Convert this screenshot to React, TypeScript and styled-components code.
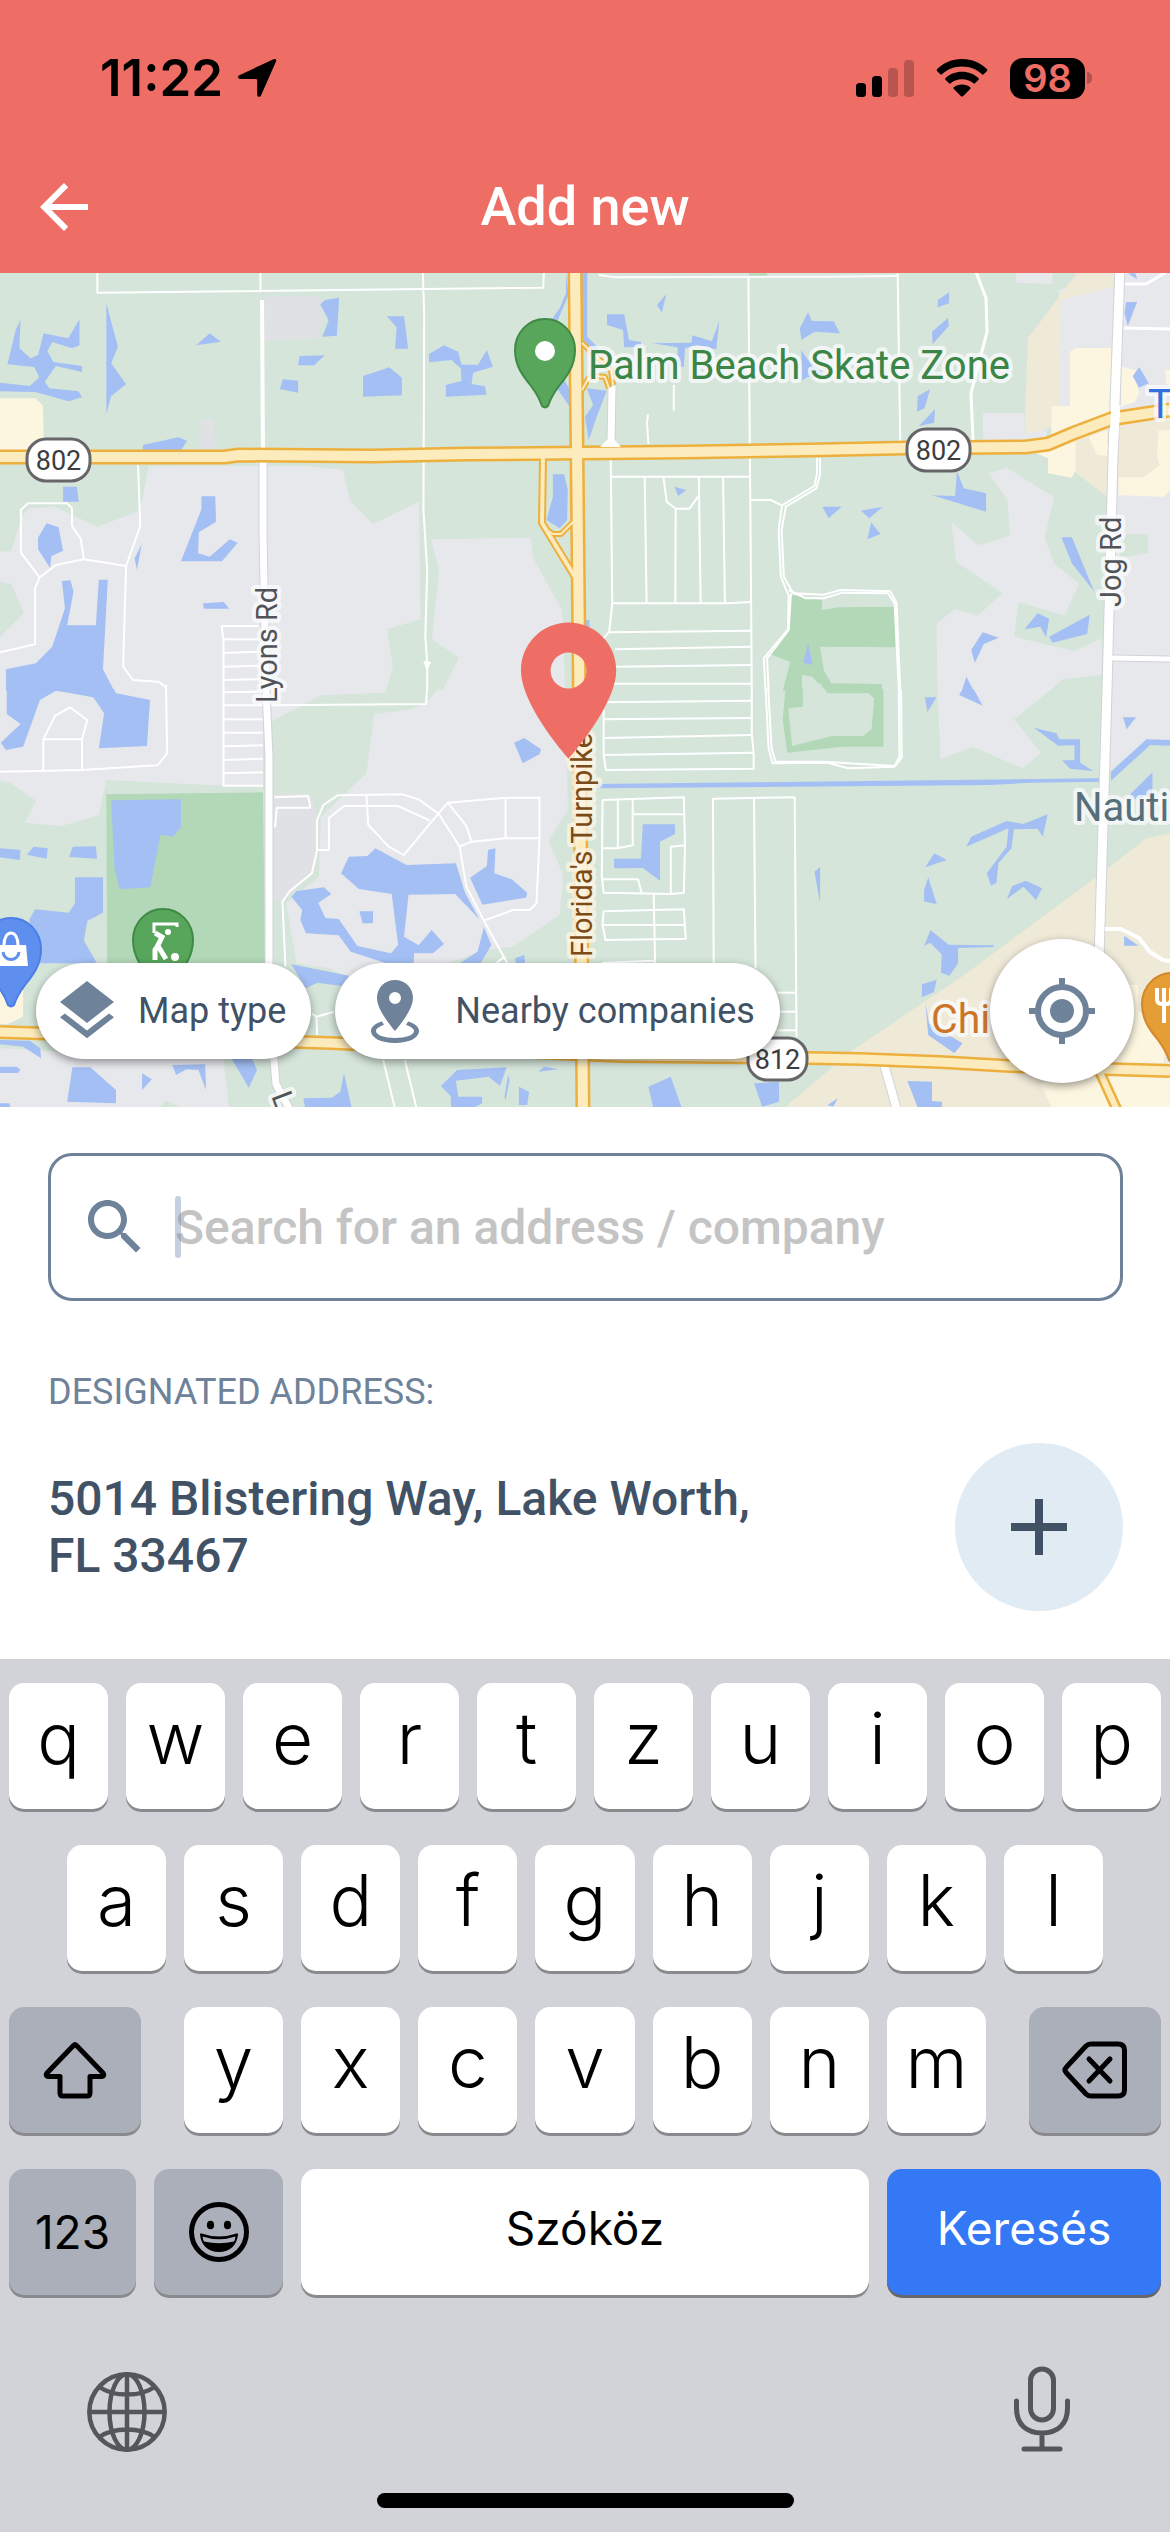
import React from "react";
import styled, { createGlobalStyle } from "styled-components";

const color = {
  brand: "#ee6e66",
  slate: "#6e8299",
  ink: "#415266",
  keyboard: "#d1d3d9",
  functionKey: "#abafba",
  tool: "#53565c",
  action: "#3478f6",
};

const ui = `Roboto, "Noto Sans", sans-serif`;
const system = `Inter, Roboto, sans-serif`;

const GlobalStyle = createGlobalStyle`
  *, *::before, *::after { box-sizing: border-box; }
  body { margin: 0; background: #fff; font-family: ${ui}; }
  button { margin: 0; padding: 0; border: 0; background: none; color: inherit; font: inherit; cursor: pointer; }
  svg { display: block; flex: none; }
`;

const Screen = styled.div`
  display: flex;
  flex-direction: column;
  min-height: 100vh;
  overflow: hidden;
`;

/* ---------- header ---------- */

const Header = styled.header`
  background: ${color.brand};
`;

const StatusBar = styled.div`
  display: flex;
  align-items: center;
  justify-content: space-between;
  height: 141px;
  padding: 15px 78px 0 100px;
  color: #000;
  font-family: ${system};
`;

const StatusGroup = styled.div<{ $gap: number }>`
  display: flex;
  align-items: center;
  gap: ${(p) => p.$gap}px;
`;

const Clock = styled.span`
  font-size: 51px;
  font-weight: 600;
  line-height: 60px;
`;

const Battery = styled.span`
  display: flex;
  align-items: center;
  gap: 2px;
`;

const BatteryLevel = styled.span`
  width: 75px;
  border-radius: 13px;
  background: #000;
  color: ${color.brand};
  font-size: 38px;
  font-weight: 600;
  line-height: 41px;
  text-align: center;
`;

const BatteryCap = styled.span`
  width: 5px;
  height: 12px;
  border-radius: 0 5px 5px 0;
  background: rgba(0, 0, 0, 0.25);
`;

const AppBar = styled.div`
  display: grid;
  grid-template-columns: 72px 1fr 72px;
  align-items: center;
  height: 132px;
  padding: 0 28px;
  color: #fff;
`;

const Title = styled.h1`
  margin: 0;
  font-size: 54px;
  font-weight: 500;
  line-height: 64px;
  text-align: center;
`;

/* ---------- map ---------- */

const MapArea = styled.section`
  position: relative;
  display: flex;
  flex: 1 1 0;
  min-height: 480px;
  overflow: hidden;
`;

const MapDrawing = styled.svg`
  width: 100%;
  height: 100%;
  font-family: ${ui};
`;

const MapControls = styled.div`
  position: absolute;
  right: 36px;
  bottom: 24px;
  left: 36px;
  display: flex;
  align-items: center;
  gap: 24px;
`;

const Pill = styled.button<{ $inset: number; $gap: number }>`
  display: flex;
  align-items: center;
  gap: ${(p) => p.$gap}px;
  height: 96px;
  padding: 0 25px 0 ${(p) => p.$inset}px;
  border-radius: 48px;
  background: #fff;
  box-shadow: 0 3px 8px rgba(0, 0, 0, 0.4);
  color: ${color.ink};
  font-size: 36px;
  line-height: 42px;
`;

const LocateButton = styled.button`
  display: flex;
  align-items: center;
  justify-content: center;
  width: 144px;
  height: 144px;
  margin-left: auto;
  border-radius: 50%;
  background: #fff;
  box-shadow: 0 3px 8px rgba(0, 0, 0, 0.4);
  color: ${color.slate};
`;

/* ---------- address panel ---------- */

const Panel = styled.section`
  padding: 46px 47px 48px 48px;
  background: #fff;
`;

const SearchBox = styled.label`
  display: flex;
  align-items: center;
  gap: 24px;
  height: 148px;
  padding: 0 28px;
  border: 3px solid ${color.slate};
  border-radius: 24px;
  color: ${color.slate};
`;

const SearchField = styled.span`
  position: relative;
  display: flex;
  flex: 1;
`;

const Caret = styled.span`
  position: absolute;
  top: 0;
  left: 0;
  width: 6px;
  height: 62px;
  border-radius: 3px;
  background: rgba(120, 140, 180, 0.42);
`;

const SearchInput = styled.input`
  width: 100%;
  height: 62px;
  padding: 0;
  border: 0;
  outline: 0;
  background: none;
  color: ${color.ink};
  font-family: ${ui};
  font-size: 48px;
  font-weight: 500;
  &::placeholder {
    color: #c4c4c4;
    opacity: 1;
  }
`;

const PanelLabel = styled.h2`
  margin: 70px 0 30px;
  color: ${color.slate};
  font-size: 36px;
  font-weight: 400;
  line-height: 42px;
`;

const AddressRow = styled.div`
  display: flex;
  align-items: center;
  justify-content: space-between;
`;

const Address = styled.p`
  max-width: 760px;
  margin: 0;
  color: ${color.ink};
  font-size: 48px;
  font-weight: 500;
  line-height: 57px;
`;

const AddButton = styled.button`
  display: flex;
  align-items: center;
  justify-content: center;
  width: 168px;
  height: 168px;
  border-radius: 50%;
  background: #e1ebf4;
  color: ${color.ink};
`;

/* ---------- keyboard ---------- */

const Keyboard = styled.section`
  display: flex;
  flex-direction: column;
  gap: 36px;
  padding: 24px 9px;
  background: ${color.keyboard};
  font-family: ${system};
`;

const KeyRow = styled.div<{ $inset?: number; $gap?: number; $grow?: number }>`
  display: flex;
  flex: ${(p) => p.$grow ?? 1} 1 0;
  gap: ${(p) => p.$gap ?? 18}px;
  padding: 0 ${(p) => p.$inset ?? 0}px;
`;

const Key = styled.button<{ $tone?: "plain" | "function" | "action"; $grow?: number }>`
  display: flex;
  flex: ${(p) => p.$grow ?? 1} 1 0;
  align-items: center;
  justify-content: center;
  min-width: 0;
  height: 126px;
  border-radius: 15px;
  background: ${(p) =>
    p.$tone === "function" ? color.functionKey : p.$tone === "action" ? color.action : "#fff"};
  box-shadow: 0 3px 0 ${(p) => (p.$tone === "action" ? "#65676b" : "#898a8d")};
  color: ${(p) => (p.$tone === "action" ? "#fff" : "#000")};
  font-size: 46px;
  line-height: 56px;
`;

const LetterKey = styled(Key)`
  padding-bottom: 16px;
  font-size: 71px;
  font-weight: 350;
  line-height: 86px;
`;

const WordKey = styled(Key)`
  padding-bottom: 8px;
`;

const ToolRow = styled.div`
  display: flex;
  align-items: flex-end;
  justify-content: space-between;
  margin-top: 35px;
  padding: 0 91px 0 78px;
  color: ${color.tool};
`;

const HomeIndicator = styled.div`
  align-self: center;
  width: 417px;
  height: 15px;
  margin-top: 5px;
  border-radius: 8px;
  background: #000;
`;

/* ---------- map data ---------- */

/* The map is split in four tiles; each one has its own 1568 x 1260 grid. */
type Tile = {
  x: number;
  y: number;
  land: [string, string][];
  water: string[];
  lanes: string[];
};

const GRAY = "#e7e8ec";
const DIM = "#e0e1e5";
const MEADOW = "#d5e5da";
const PARK = "#b2d8b8";
const SAND = "#efe9d8";
const CREAM = "#fcf5e0";
const WATER = "#a3bff4";

const tiles: Tile[] = [
  {
    x: 0,
    y: 270,
    land: [
      [GRAY, "0,845 30,843 58,740 75,716 145,710 262,770 375,722 399,588 820,587 920,600 937,690 1000,762 1123,695 1127,1048 1037,1078 1053,1187 1035,1262 0,1262"],
      [MEADOW, "0,935 30,942 64,1030 0,1100"],
      [GRAY, "1155,808 1422,803 1428,862 1507,1022 1515,1262 1185,1262 1230,1163 1158,1108 1177,900"],
      [DIM, "708,78 858,80 870,135 852,205 708,212"],
      [DIM, "540,448 572,445 578,540 535,540"],
      [CREAM, "0,385 95,385 115,407 118,545 0,545"],
    ],
    water: [
      "55,150 52,235 82,265 102,255 117,190 183,205 213,148 213,226 193,235 140,216 127,243 143,276 220,288 220,306 150,288 120,335 132,355 210,364 220,382 184,394 95,366 0,364 0,338 80,348 105,322 92,291 20,283 42,180",
      "285,100 316,230 298,280 338,343 298,378 285,432",
      "526,226 562,190 592,215",
      "858,103 872,90 909,83 903,197 864,200 881,150",
      "1037,139 1083,139 1094,236 1059,236 1063,172",
      "803,258 870,256 842,286 799,286",
      "758,328 799,332 799,368 750,357",
      "973,318 1044,292 1077,323 1077,376 973,380",
      "1150,252 1190,226 1228,245 1237,284 1281,284 1305,240 1321,290 1268,308 1264,342 1300,349 1304,374 1195,380 1195,345 1237,333 1235,295 1210,270 1150,277",
      "383,525 478,502 501,512 486,540 383,542",
      "169,650 206,650 211,695 169,695",
      "102,803 125,760 157,772 169,842 138,858 134,893 102,838",
      "540,679 577,679 579,755 533,787 531,850 562,860 616,808 637,818 595,874 485,874 540,718",
      "380,822 367,900 361,865",
      "544,1000 600,996 614,1016 546,1016",
      "166,933 189,931 197,965 180,1066 257,1066 265,929 289,929 276,1198 306,1262 16,1262 16,1198 96,1180 140,1130 174,1015",
      "1517,10 1524,75 1495,150 1478,150 1500,115 1517,70",
      "1490,350 1510,325 1528,360 1528,412",
      "1482,613 1512,613 1522,660 1520,750 1500,775 1465,750 1482,680",
    ],
    lanes: [
      "261,0 261,68 1456,53 1458,0",
      "698,0 698,62",
      "1133,0 1137,130 1135,720 1145,900 1140,1100 1145,1180 1145,1260",
      "370,585 376,768 338,888 330,1190 357,1230 425,1235 445,1252",
      "338,888 225,868 216,806 193,768 193,715 180,700 75,700 56,720 56,848 106,922 94,955 94,1123 0,1147",
      "106,922 150,885 225,868",
      "693,1068 594,1068 599,1110 599,1260",
      "599,1108 700,1108",
      "599,1149 700,1145",
      "599,1190 700,1187",
      "599,1230 700,1227",
      "1137,1175 1145,1195 1152,1178 1137,1175",
    ],
  },
  {
    x: 585,
    y: 270,
    land: [
      [GRAY, "1155,0 1253,0 1253,43 1157,38"],
      [GRAY, "1270,60 1418,0 1568,0 1568,1262 1385,1262 1400,680 1400,440 1270,440"],
      [SAND, "1318,10 1418,10 1418,50 1275,90 1270,410 1250,470 1190,500 1178,485 1187,205"],
      [GRAY, "982,755 995,875 1120,970 1053,1036 990,1018 942,1062 945,1262 1245,1262 1280,1228 1385,1215 1385,1105 1310,1143 1150,1100 1162,997 1285,1036 1325,942 1258,882 1232,803 1257,682 1132,594 1082,610 1132,690 1140,797 1053,826"],
      [GRAY, "1067,430 1177,430 1178,490 1240,480 1230,520 1067,520"],
      [CREAM, "1300,245 1315,234 1410,234 1410,450 1360,475 1250,510 1250,408 1300,408"],
      [CREAM, "1437,290 1475,300 1485,370 1475,395 1437,410"],
      [CREAM, "1555,300 1568,300 1568,350 1558,340"],
      [SAND, "1310,510 1430,450 1568,440 1568,640 1430,640 1400,680 1315,608"],
      [CREAM, "1200,545 1315,500 1315,600 1305,623 1241,610 1241,565"],
      [CREAM, "1350,500 1400,480 1400,557 1372,555"],
      [CREAM, "1430,622 1498,622 1540,585 1533,560 1537,482 1568,480 1568,660 1553,680 1430,676"],
      [MEADOW, "1450,793 1509,793 1509,848 1430,865"],
      [PARK, "440,10 488,10 488,18 440,18"],
      [PARK, "552,975 635,990 635,1020 680,1012 830,1010 833,1132 630,1130 640,1200 660,1240 795,1242 797,1262 530,1262 550,1175 490,1150 545,1080"],
      [MEADOW, "582,1215 610,1220 640,1262 582,1262"],
    ],
    water: [
      "193,105 218,72 206,128",
      "59,133 105,133 118,210 150,216 150,230 105,232 102,180 59,165",
      "180,220 285,218 288,196 340,214 360,152 352,238 300,225 268,235 265,290 250,290 248,232",
      "576,175 598,126 608,153 667,154 683,190 615,185 580,210",
      "580,240 598,270 640,310 620,325 598,320 580,332",
      "946,90 976,67 976,100 945,112",
      "930,185 973,144 975,168 932,222",
      "892,378 925,358 910,415 890,425",
      "938,418 936,458 895,468",
      "5,355 58,362 35,430 10,510 0,440 22,405",
      "240,650 272,660 250,678",
      "636,710 688,710 653,745",
      "740,722 798,710 762,745",
      "767,757 792,792 757,808",
      "997,603 1015,655 1075,670 1075,725 930,676 992,678",
      "1277,802 1305,802 1365,965 1305,880",
      "1213,1030 1244,1046 1236,1102 1220,1070 1178,1078",
      "1244,1100 1353,1034 1346,1092 1253,1118",
      "1066,1087 1109,1103 1069,1122 1045,1178 1035,1140",
      "1022,1220 1042,1262 1010,1262",
      "598,1118 610,1185 585,1178",
      "1450,97 1480,95 1455,168 1446,130",
      "1486,292 1511,340 1485,353 1468,318",
      "1455,10 1475,10 1480,28",
      "0,1050 12,1050 12,1075 0,1075",
      "-12,0 6,0 6,200 36,235 26,248 -12,205",
    ],
    lanes: [
      "37,15 80,22 640,20 838,18",
      "438,22 445,960 447,1260",
      "838,10 845,515",
      "238,345 238,422",
      "169,433 166,460 170,522",
      "69,570 73,1000 65,1085 50,1105",
      "71,620 440,620",
      "160,620 165,1000",
      "210,620 219,695 243,716 280,716 305,677",
      "243,716 242,1000",
      "305,620 310,1000",
      "370,620 375,1000",
      "73,1000 380,1000 445,996",
      "65,1087 445,1082",
      "80,1138 445,1130",
      "80,1190 445,1185",
      "60,1241 445,1241",
      "445,690 498,690 528,706 615,648 622,610 622,563",
      "535,712 620,655 630,615 630,563",
      "528,706 519,780 525,920 546,978",
      "538,712 527,780 533,920 558,970 640,974 685,960 818,964 835,998 845,1260",
      "546,960 592,985 640,985 690,968 812,970 830,1000 841,1260",
      "552,970 546,1080 488,1165 492,1260",
      "546,978 544,1078 479,1165 484,1260",
    ],
  },
  {
    x: 0,
    y: 690,
    land: [
      [GRAY, "0,-2 1035,-2 1030,8 862,16 725,96 705,100 705,287 598,287 285,270 265,375 165,408 66,398 97,333 30,280 0,272"],
      [DIM, "735,312 838,312 848,380 848,540 760,630 735,630"],
      [GRAY, "1172,-2 1515,-2 1522,360 1470,452 1510,555 1500,675 1375,770 1300,780 1200,820 1100,850 930,860 880,835 795,820 767,640 855,560 860,380 925,310 982,250 1003,73 1100,58 1142,40"],
      [GRAY, "0,1075 100,1080 300,1100 598,1100 615,1262 0,1262"],
      [MEADOW, "420,1260 445,1232 500,1260"],
      [PARK, "285,313 705,307 712,1000 288,1000"],
      [CREAM, "0,830 62,830 62,980 20,1003 0,1003"],
    ],
    water: [
      "18,-2 305,-2 312,10 402,30 394,168 265,175 279,70 250,22 190,10 150,2 107,30 62,170 16,180 2,158 55,102 18,72",
      "298,331 485,328 485,412 463,440 430,434 403,592 320,598 307,535",
      "0,475 55,480 53,510 0,502",
      "72,494 90,470 128,475 125,506",
      "195,470 257,469 260,506 185,501",
      "201,562 276,562 276,668 234,693 225,752 260,820 100,820 78,690 94,658 184,668 201,640",
      "1378,158 1405,144 1450,178 1447,192 1401,220",
      "935,500 985,498 1006,475 1090,525 1222,520 1247,610 1285,688 1220,612 1095,614 1083,740 1122,766 1157,720 1190,762 1160,790 1110,790 1108,825 1050,825 940,785 908,736 820,730 805,690 810,660 781,620 795,603 868,592 888,612 853,638 872,684 908,687 958,768 1048,790 1067,765 1050,612 962,597 914,550",
      "963,664 1000,664 1000,700 972,700",
      "1308,480 1328,475 1325,550 1372,568 1413,608 1410,623 1293,644 1260,563 1305,528",
      "1297,712 1317,765 1285,825 1225,825 1280,785",
      "1380,805 1405,795 1408,825 1385,825",
      "781,823 935,857 915,888 850,878 820,895",
      "0,1050 80,1052 108,1075 110,1105 62,1070 0,1063",
      "0,1130 45,1130 55,1140 48,1149 0,1149",
      "194,1132 242,1132 311,1200 311,1240 180,1235",
      "381,1150 407,1168 381,1200",
      "462,1125 550,1123 552,1200 532,1140 500,1138 472,1155",
      "620,1105 675,1105 689,1140 667,1193",
      "813,1225 890,1223 912,1205 922,1150 944,1262 820,1262",
      "1182,1188 1225,1140 1358,1132 1340,1188 1310,1160 1222,1172 1228,1220 1292,1220 1292,1240 1255,1262 1210,1262 1208,1218",
      "1362,1155 1366,1170 1355,1230 1352,1220",
      "1391,1190 1418,1206 1413,1245 1391,1245",
      "1443,1145 1458,1130 1496,1138",
      "0,1240 25,1240 30,1262 0,1262",
    ],
    lanes: [
      "599,0 599,287 705,287",
      "599,7 705,5",
      "599,46 705,46",
      "599,88 705,88",
      "599,128 705,128",
      "599,169 705,166",
      "599,210 705,206",
      "599,250 705,247",
      "445,-15 448,190 422,226 220,240 0,245",
      "116,240 116,148 148,77 188,52 234,90 220,148 220,240",
      "116,148 220,148",
      "725,46 1142,42 1145,-10",
      "735,322 826,318 832,353 742,353 737,412",
      "765,830 757,635 777,603 836,550 850,480 850,390 867,345 905,316 1080,313 1122,328 1175,370 1232,470 1250,590 1297,692 1360,820",
      "850,480 882,480 882,384 922,348 1067,348 1152,392",
      "982,313 987,405 1042,470 1082,495 1200,338 1355,323 1446,323 1446,445 1438,640 1420,660 1375,660 1297,692",
      "1200,338 1250,408 1264,455 1232,470",
      "1264,455 1356,445 1446,445",
      "1355,323 1355,445",
      "1353,800 1330,820",
      "835,970 848,980 895,965",
      "848,980 850,1035",
      "1027,1110 1060,1262",
      "1085,1110 1118,1262",
    ],
  },
  {
    x: 585,
    y: 690,
    land: [
      [GRAY, "945,-2 1250,-2 1150,88 1222,188 1172,235 1040,170 953,208"],
      [GRAY, "1400,-2 1568,-2 1568,150 1505,150 1405,245"],
      [SAND, "1568,430 1505,445 1372,560 1010,860 715,1082 525,1262 1568,1262"],
      [CREAM, "1400,885 1482,885 1482,960 1552,1020 1552,1118 1400,1118"],
      [CREAM, "1220,1180 1365,1150 1568,1160 1568,1262 1255,1262"],
      [PARK, "537,-2 800,-2 800,170 690,170 542,188 530,90"],
      [MEADOW, "584,-20 630,-20 650,10 760,10 775,25 768,118 745,138 662,138 555,168 545,55 584,50"],
    ],
    water: [
      "28,282 455,277 1380,265 1380,275 1195,278 1088,285 380,292 30,295",
      "1410,245 1505,148 1568,150 1568,167 1515,165 1410,272",
      "911,22 942,22 918,66",
      "1003,15 1012,-2 1042,-2 1066,47",
      "1442,82 1477,82 1452,118",
      "1203,113 1264,130 1271,148 1327,148 1327,218 1362,243 1300,236 1279,211 1312,211 1312,166 1268,167",
      "1521,247 1521,320 1462,330 1462,312",
      "155,403 241,403 241,432 201,455 201,572 155,534 78,535 78,506 150,506",
      "615,545 630,531 630,638",
      "1022,470 1035,440 1130,393 1175,402 1240,373 1227,440 1213,416 1150,418 1143,475 1108,520 1103,578 1088,587 1077,550 1130,470 1135,415",
      "912,532 936,490 970,510",
      "920,562 943,643 909,634 909,600",
      "1131,627 1145,588 1182,572 1225,595 1209,630 1175,590",
      "926,720 975,764 1096,766 1096,771 1000,774 1000,820 977,857 954,848 956,793 925,758 909,768",
      "903,883 943,869 935,906 903,922",
      "912,935 922,1000 1012,1060 990,1090 920,1035",
      "1445,737 1484,767 1445,767",
      "170,1190 230,1160 262,1262 185,1262",
      "453,1180 520,1175 520,1235 475,1250",
      "864,1173 930,1175 930,1233 957,1235 957,1262 895,1262",
      "678,1225 665,1250 650,1245",
    ],
    lanes: [
      "50,37 447,32",
      "50,88 447,84",
      "50,144 447,135",
      "50,195 450,188",
      "50,60 50,195 56,240 452,236 452,190 447,132 447,0",
      "484,-5 492,175 503,220 650,218 705,235 830,230 849,203 847,0",
      "491,-5 500,175 511,215 640,215 830,228 843,200 841,0",
      "47,330 265,322 268,470 265,608 230,612 50,608 45,560 47,330",
      "88,328 88,474",
      "128,326 128,466 85,475 48,475",
      "130,373 265,373",
      "270,466 230,470 230,612",
      "47,568 142,568 152,610",
      "184,612 188,820",
      "50,664 265,658 270,746 55,750 47,705 50,664",
      "47,705 270,705",
      "47,818 188,812",
      "345,830 343,326 562,322 567,1040",
      "453,322 457,835",
      "515,908 567,908",
      "520,965 567,965",
      "515,1021 567,1021",
    ],
  },
];

const streets: { width: number; line: string; edge?: boolean }[] = [
  { width: 4, line: "262,300 263,456" },
  { width: 7, line: "263,461 263,533 264,583 266,690 269,757 269,964 274,1060 276,1084 290,1110", edge: true },
  { width: 9, line: "1120,268 1113,457 1107,690 1099,960", edge: true },
  { width: 7, line: "612,386 611,446", edge: true },
  { width: 5, line: "1112,658 1170,659", edge: true },
  { width: 8, line: "884,1064 897,1110", edge: true },
  { width: 3, line: "976,272 986,298 987,332 977,370 971,393 973,440" },
  { width: 3, line: "1125,284 1146,284 1165,273" },
  { width: 3, line: "1124,328 1170,329" },
  { width: 4, line: "1105,929 1121,929 1139,938 1150,952 1163,960 1170,961" },
];

const highways: { width: number; line: string }[] = [
  { width: 8, line: "543,457 542,523 575,577" },
  { width: 6, line: "547,530 553,534 561,534 575,520" },
  { width: 6, line: "582,343 600,360 611,370 613,385" },
  { width: 6, line: "582,390 588,379 594,376 605,377 609,388" },
  { width: 11, line: "1098,1068 1118,1112" },
  { width: 15, line: "0,457 224,457 239,455 373,456 466,454 585,453 686,452 809,450 906,448 1025,447 1048,444 1074,433 1111,419 1170,410" },
  { width: 14, line: "0,1032 330,1043 620,1056 809,1058 860,1059 940,1062 1010,1066 1170,1071" },
  { width: 15, line: "575,268 577,450 579,650 583,1112" },
];

const PIN =
  "M0-31C17-31 30-17 30 0C30 16 22 26 14 36C8 44 5 50 3 56Q0 59-3 56C-5 50-8 44-14 36C-22 26-30 16-30 0C-30-17-17-31 0-31Z";

const tilePlace = (t: Tile) => `translate(${t.x} ${t.y}) scale(.37309 .33333)`;

function Shield({ x, y, width, label }: { x: number; y: number; width: number; label: string }) {
  return (
    <g>
      <rect x={x} y={y} width={width} height={42} rx={19} fill="#fff" stroke="#66666a" strokeWidth={3} />
      <text x={x + width / 2} y={y + 31} fontSize={27} textAnchor="middle" fill="#3c3d40">
        {label}
      </text>
    </g>
  );
}

function MapLabel(props: { x: number; y: number; size: number; fill: string; turn?: number; halo?: string; children: string }) {
  return (
    <text
      x={props.x}
      y={props.y}
      fontSize={props.size}
      fill={props.fill}
      stroke={props.halo ?? "#fafbfc"}
      strokeOpacity={0.8}
      strokeWidth={8}
      strokeLinejoin="round"
      paintOrder="stroke"
      transform={props.turn ? `rotate(${props.turn} ${props.x} ${props.y})` : undefined}
    >
      {props.children}
    </text>
  );
}

function StreetMap() {
  return (
    <MapDrawing viewBox="0 273 1170 834" preserveAspectRatio="xMidYMid slice" role="img" aria-label="Map">
      <rect x={0} y={273} width={1170} height={834} fill={MEADOW} />
      {tiles.map((t, i) => (
        <g key={i} transform={tilePlace(t)}>
          {t.land.map(([fill, points], k) => (
            <polygon key={k} points={points} fill={fill} />
          ))}
        </g>
      ))}
      {tiles.map((t, i) => (
        <g key={i} transform={tilePlace(t)} fill={WATER}>
          {t.water.map((points, k) => (
            <polygon key={k} points={points} />
          ))}
        </g>
      ))}
      {tiles.map((t, i) => (
        <g key={i} transform={tilePlace(t)} fill="none" stroke="#fff" strokeWidth={2} strokeLinejoin="round">
          {t.lanes.map((points, k) => (
            <polyline key={k} points={points} vectorEffect="non-scaling-stroke" />
          ))}
        </g>
      ))}
      <g fill="none" strokeLinejoin="round">
        {streets.map((s, i) => (
          <g key={i}>
            {s.edge && <polyline points={s.line} stroke="#d0d3d8" strokeWidth={s.width + 2} />}
            <polyline points={s.line} stroke="#fff" strokeWidth={s.width} />
          </g>
        ))}
        {highways.map((h, i) => (
          <polyline key={i} points={h.line} stroke="#edb03d" strokeWidth={h.width} />
        ))}
        {highways.map((h, i) => (
          <polyline key={i} points={h.line} stroke="#fcebbd" strokeWidth={h.width - (h.width > 8 ? 5 : 4)} />
        ))}
        <path d="M611 436L600 447H621Z" fill="#fff" />
        <polyline points="1116,405 1113,450" stroke="#fff" strokeWidth={9} />
      </g>

      <Shield x={27} y={439} width={63} label="802" />
      <Shield x={907} y={429} width={63} label="802" />
      <Shield x={748} y={1038} width={59} label="812" />

      <MapLabel x={588} y={379} size={40} fill="#3b8546">Palm Beach Skate Zone</MapLabel>
      <MapLabel x={277} y={703} size={29} fill="#505358" turn={-90}>Lyons Rd</MapLabel>
      <MapLabel x={1121} y={607} size={29} fill="#505358" turn={-90}>Jog Rd</MapLabel>
      <MapLabel x={271} y={1096} size={29} fill="#505358" turn={69}>L</MapLabel>
      <MapLabel x={592} y={957} size={29} fill="#7a4a17" halo="#fdf5e4" turn={-90}>Florida's Turnpike</MapLabel>
      <MapLabel x={1074} y={821} size={40} fill="#566f7a">Nauti</MapLabel>
      <MapLabel x={931} y={1033} size={41} fill="#cc7427">Chi</MapLabel>
      <MapLabel x={1148} y={418} size={41} fill="#3170dd">Ta</MapLabel>

      <g strokeWidth={2}>
        <g transform="translate(545 350)">
          <path d={PIN} fill="#58a55c" stroke="#3f8a45" />
          <circle r={10} cy={1} fill="#fff" stroke="none" />
        </g>
        <g transform="translate(163 940)">
          <path d={PIN} fill="#58a55c" stroke="#3f8a45" />
          <g fill="none" stroke="#fff" strokeWidth={3}>
            <path d="M-9-7V-16H14V-13" />
            <path d="M-8-7L-1-3L-6 7L-8 10V20M-5 6L3 19" strokeWidth={5} />
          </g>
          <g fill="#fff" stroke="none">
            <circle cx={5} cy={-8} r={3} />
            <circle cx={12} cy={17} r={4} />
          </g>
        </g>
        <g transform="translate(11 949)">
          <path d={PIN} fill="#5f8fee" stroke="#4a7fe8" />
          <path d="M-16-4H15L17 17H-16Z" fill="#fff" stroke="none" />
          <path d="M-7-4C-7-20 7-20 7-4" fill="none" stroke="#fff" strokeWidth={3} />
          <path d="M-8 3C-7 13 7 13 8 3" fill="none" stroke="#5f8fee" strokeWidth={3} />
        </g>
        <g transform="translate(1172 1004)">
          <path d={PIN} fill="#e59d36" stroke="#d3862a" />
          <path d="M-15-16V-5Q-15 0-10 0H-6Q-1 0-1-5V-16M-8-16V19" fill="none" stroke="#fff" strokeWidth={4} />
        </g>
      </g>

      <path
        transform="translate(487 609) scale(6.8)"
        fill={color.brand}
        fillRule="evenodd"
        d="M12 2C8.13 2 5 5.13 5 9c0 5.25 7 13 7 13s7-7.75 7-13c0-3.87-3.13-7-7-7zm0 4.4a2.65 2.65 0 1 0 0 5.3 2.65 2.65 0 0 0 0-5.3z"
      />
    </MapDrawing>
  );
}

/* ---------- icons ---------- */

const Glyph = ({ d, size = 72, fill = "currentColor" }: { d: string; size?: number; fill?: string }) => (
  <svg width={size} height={size} viewBox="0 0 24 24" fill={fill} aria-hidden="true">
    <path d={d} />
  </svg>
);

const BACK = "M20 11H7.83l5.59-5.59L12 4l-8 8 8 8 1.41-1.41L7.83 13H20v-2z";
const LAYERS =
  "M11.99 18.54l-7.37-5.73L3 14.07l9 7 9-7-1.63-1.27-7.38 5.74zM12 16l7.36-5.73L21 9l-9-7-9 7 1.63 1.27L12 16z";
const SEARCH =
  "M15.5 14h-.79l-.28-.27C15.41 12.59 16 11.11 16 9.5 16 5.91 13.09 3 9.5 3S3 5.91 3 9.5 5.91 16 9.5 16c1.61 0 3.09-.59 4.23-1.57l.27.28v.79l5 4.99L20.49 19l-4.99-5zm-6 0C7.01 14 5 11.99 5 9.5S7.01 5 9.5 5 14 7.01 14 9.5 11.99 14 9.5 14z";
const PLUS = "M19 13h-6v6h-2v-6H5v-2h6V5h2v6h6v2z";

const LocationArrow = () => (
  <svg width="40" height="40" viewBox="0 0 40 40" aria-hidden="true">
    <path d="M36.5 1.2C38.6.3 39.8 1.6 39 3.6L24 37.4C23 39.6 20.2 39.2 20.2 36.8V22.4Q20.2 21 18.8 21H3.2C.8 21 .2 18.2 2.4 17.2Z" />
  </svg>
);

const Signal = () => (
  <svg width="58" height="38" viewBox="0 0 58 38" aria-hidden="true">
    <rect y="24" width="10" height="14" rx="3.5" />
    <rect x="16" y="17" width="10" height="21" rx="3.5" />
    <rect x="32" y="9" width="10" height="29" rx="3.5" opacity=".22" />
    <rect x="48" y="1" width="10" height="37" rx="3.5" opacity=".22" />
  </svg>
);

const Wifi = () => (
  <svg width="52" height="38" viewBox="0 0 52 38" aria-hidden="true">
    <path d="M26 0C36 0 44.800 3.900 51 10.300Q51.700 11.200 51 12L47.700 15.300Q46.900 16 46 15.300C40.700 10.300 33.700 7.600 26 7.600S11.300 10.300 6 15.300Q5.100 16 4.300 15.300L1 12Q.3 11.200 1 10.300C7.200 3.900 16 0 26 0Z" />
    <path d="M26 12.800C32.500 12.800 38.300 15.200 42.600 19.200Q43.300 20 42.600 20.800L39 24.300Q38.200 25 37.400 24.300C34.300 21.600 30.300 20.200 26 20.200S17.700 21.600 14.600 24.300Q13.800 25 13 24.300L9.400 20.800Q8.700 20 9.400 19.200C13.700 15.200 19.500 12.800 26 12.800Z" />
    <path d="M26 25.500C29.200 25.500 32 26.500 34.200 28.200Q35 29 34.200 29.900L27 37.200Q26 38 25 37.200L17.800 29.900Q17 29 17.800 28.200C20 26.500 22.800 25.500 26 25.500Z" />
  </svg>
);

const NearbyIcon = () => (
  <svg width="72" height="72" viewBox="0 0 72 72" fill={color.slate} aria-hidden="true">
    <path
      fillRule="evenodd"
      d="M36 5C25.500 5 18 13 18 23C18 36 36 56 36 56S54 36 54 23C54 13 46.500 5 36 5ZM36 17A6 6 0 1 1 36 29A6 6 0 0 1 36 17Z"
    />
    <path d="M23 46.500C16 48.500 12 52 12 56C12 63 22 68 36 68S60 63 60 56C60 52 56 48.500 49 46.500L47 50C52 51.500 55 53.500 55 56C55 60 47 63 36 63S17 60 17 56C17 53.500 20 51.500 25 50Z" />
  </svg>
);

const LocateIcon = () => (
  <svg width="72" height="72" viewBox="0 0 72 72" fill="none" stroke="currentColor" strokeWidth="6" aria-hidden="true">
    <circle cx="36" cy="36" r="24" />
    <circle cx="36" cy="36" r="12" fill="currentColor" stroke="none" />
    <path d="M36 3V12M36 60V69M3 36H12M60 36H69" />
  </svg>
);

const ShiftIcon = () => (
  <svg width="66" height="60" viewBox="0 0 66 60" fill="none" stroke="#000" strokeWidth="5" strokeLinejoin="round" aria-hidden="true">
    <path d="M31.500 5.500Q33 4 34.500 5.500L61 33Q63 36 60 36.500H48V53Q48 56 45 56H21Q18 56 18 53V36.500H6Q3 36 5 33Z" />
  </svg>
);

const BackspaceIcon = () => (
  <svg width="66" height="60" viewBox="0 0 66 60" fill="none" stroke="#000" strokeWidth="5" strokeLinejoin="round" strokeLinecap="round" aria-hidden="true">
    <path d="M29 4H56Q62.500 4 62.500 10V50Q62.500 56 56 56H29Q26 56 24 54L4.500 33Q1.500 30 4.500 27L24 6Q26 4 29 4Z" />
    <path d="M27 19L48 41M48 19L27 41" />
  </svg>
);

const EmojiIcon = () => (
  <svg width="60" height="60" viewBox="0 0 60 60" aria-hidden="true">
    <circle cx="30" cy="30" r="27.500" fill="none" stroke="#000" strokeWidth="5" />
    <ellipse cx="21.500" cy="23" rx="3.600" ry="4.300" />
    <ellipse cx="38.500" cy="23" rx="3.600" ry="4.300" />
    <path d="M11 32.500Q10.500 31 12.500 31.500Q30 37.500 47.500 31.500Q49.500 31 49 32.500C48 43 41 50 30 50S12 43 11 32.500Z" />
    <path d="M13.500 34.500Q30 40 46.500 34.500Q46 38 45 39.500Q30 43 15 39.500Q14 38 13.500 34.500Z" fill={color.functionKey} />
  </svg>
);

const GlobeIcon = () => (
  <svg width="80" height="80" viewBox="0 0 80 80" fill="none" stroke="currentColor" strokeWidth="4.500" aria-hidden="true">
    <circle cx="40" cy="40" r="37.700" />
    <ellipse cx="40" cy="40" rx="17.500" ry="37.700" />
    <path d="M40 2V78M2 40H78M12.500 15Q23 22.500 40 22.500T67.500 15M12.500 65Q23 57.500 40 57.500T67.500 65" />
  </svg>
);

const MicIcon = () => (
  <svg width="56" height="86" viewBox="0 0 56 86" fill="none" stroke="currentColor" strokeWidth="5" strokeLinecap="round" aria-hidden="true">
    <rect x="16.500" y="3" width="23" height="51" rx="11.500" />
    <path d="M2.500 35V42C2.500 58 12 67 28 67S53.500 58 53.500 42V35M28 67V83M10 83H46" />
  </svg>
);

/* ---------- page ---------- */

const letters = (row: string) => [...row].map((c) => <LetterKey key={c}>{c}</LetterKey>);

export default function App() {
  return (
    <Screen>
      <GlobalStyle />
      <Header>
        <StatusBar>
          <StatusGroup $gap={14}>
            <Clock>11:22</Clock>
            <LocationArrow />
          </StatusGroup>
          <StatusGroup $gap={22}>
            <Signal />
            <Wifi />
            <Battery>
              <BatteryLevel>98</BatteryLevel>
              <BatteryCap />
            </Battery>
          </StatusGroup>
        </StatusBar>
        <AppBar>
          <button aria-label="Back">
            <Glyph d={BACK} />
          </button>
          <Title>Add new</Title>
        </AppBar>
      </Header>

      <MapArea>
        <StreetMap />
        <MapControls>
          <Pill $inset={15} $gap={15}>
            <Glyph d={LAYERS} fill={color.slate} />
            Map type
          </Pill>
          <Pill $inset={24} $gap={24}>
            <NearbyIcon />
            Nearby companies
          </Pill>
          <LocateButton aria-label="My location">
            <LocateIcon />
          </LocateButton>
        </MapControls>
      </MapArea>

      <Panel>
        <SearchBox>
          <Glyph d={SEARCH} />
          <SearchField>
            <SearchInput type="text" placeholder="Search for an address / company" aria-label="Search for an address / company" />
            <Caret />
          </SearchField>
        </SearchBox>
        <PanelLabel>DESIGNATED ADDRESS:</PanelLabel>
        <AddressRow>
          <Address>5014 Blistering Way, Lake Worth, FL 33467</Address>
          <AddButton aria-label="Add address">
            <Glyph d={PLUS} size={96} />
          </AddButton>
        </AddressRow>
      </Panel>

      <Keyboard>
        <KeyRow>{letters("qwertzuiop")}</KeyRow>
        <KeyRow $inset={58}>{letters("asdfghjkl")}</KeyRow>
        <KeyRow $gap={43}>
          <Key $tone="function" $grow={132} aria-label="Shift">
            <ShiftIcon />
          </Key>
          <KeyRow $grow={802}>{letters("yxcvbnm")}</KeyRow>
          <Key $tone="function" $grow={132} aria-label="Delete">
            <BackspaceIcon />
          </Key>
        </KeyRow>
        <KeyRow>
          <Key $tone="function" $grow={127}>123</Key>
          <Key $tone="function" $grow={129} aria-label="Emoji">
            <EmojiIcon />
          </Key>
          <WordKey $grow={568}>Szóköz</WordKey>
          <WordKey $tone="action" $grow={274}>Keresés</WordKey>
        </KeyRow>
        <ToolRow>
          <button aria-label="Next keyboard">
            <GlobeIcon />
          </button>
          <button aria-label="Dictate">
            <MicIcon />
          </button>
        </ToolRow>
        <HomeIndicator />
      </Keyboard>
    </Screen>
  );
}
